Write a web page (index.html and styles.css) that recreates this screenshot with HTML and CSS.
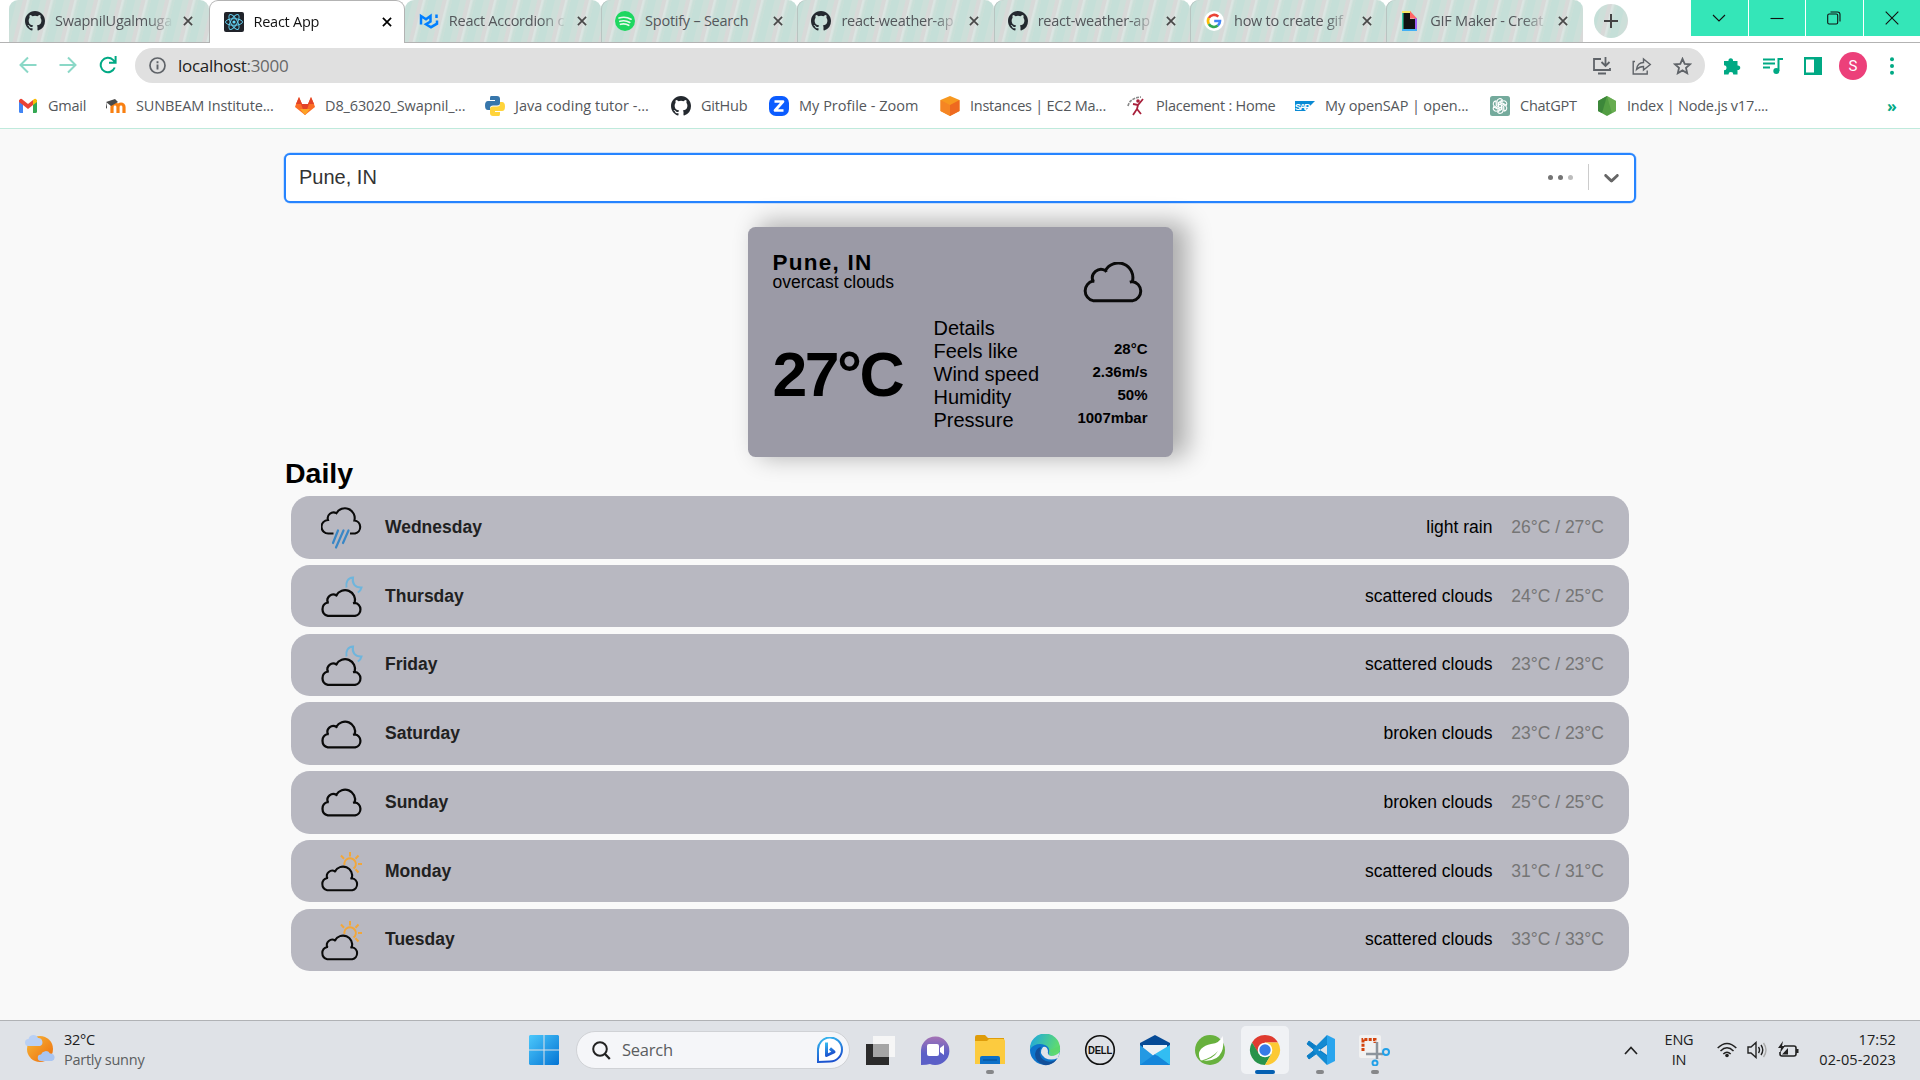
FILE: index.html
```html
<!DOCTYPE html>
<html lang="en">
<head>
<meta charset="utf-8">
<title>React App</title>
<link rel="stylesheet" href="styles.css">
</head>
<body>
<svg class="defs" width="0" height="0">
  <defs>
    <symbol id="github" viewBox="0 0 16 16"><path fill="#24292f" d="M8 0C3.58 0 0 3.58 0 8c0 3.54 2.29 6.53 5.47 7.59.4.07.55-.17.55-.38 0-.19-.01-.82-.01-1.49-2.01.37-2.53-.49-2.69-.94-.09-.23-.48-.94-.82-1.13-.28-.15-.68-.52-.01-.53.63-.01 1.08.58 1.23.82.72 1.21 1.87.87 2.33.66.07-.52.28-.87.51-1.07-1.78-.2-3.64-.89-3.64-3.95 0-.87.31-1.59.82-2.15-.08-.2-.36-1.02.08-2.12 0 0 .67-.21 2.2.82a7.4 7.4 0 0 1 4 0c1.53-1.04 2.2-.82 2.2-.82.44 1.1.16 1.92.08 2.12.51.56.82 1.27.82 2.15 0 3.07-1.87 3.75-3.65 3.95.29.25.54.73.54 1.48 0 1.07-.01 1.93-.01 2.2 0 .21.15.46.55.38A8.01 8.01 0 0 0 16 8c0-4.42-3.58-8-8-8z"/></symbol>
    <symbol id="x" viewBox="0 0 10 10"><path d="M.9.9l8.2 8.2M9.100.9L.9 9.100" fill="none" stroke="currentColor" stroke-width="1.700"/></symbol>
    <symbol id="cloud" viewBox="0 0 60 40" overflow="visible"><path fill="none" stroke="#0a0a0a" stroke-linejoin="round" d="M10.500 37.700H49.500A9.500 9.500 0 0 0 48.900 19A14.300 14.300 0 0 0 22.600 8.300A8.500 8.500 0 0 0 10.400 18.600A9.800 9.800 0 0 0 10.500 37.700ZM48.900 19l-2.500 .6M22.600 8.300l1 1.500M10.400 18.600l1.500 .2"/></symbol>
    <symbol id="moon-cloud" viewBox="0 0 42 62"><path d="M25.500 22.500C24.500 17 27 12.800 32 12.500C30.800 18.500 34 22.800 40.500 22.500C40 25 38.500 26.500 36.800 27.500" fill="none" stroke="#6fb5dc" stroke-width="2"/><use href="#cloud" x="-.5" y="24.500" width="42" height="28"/></symbol>
    <symbol id="sun-cloud" viewBox="0 0 42 62"><g fill="none" stroke="#f2a73a" stroke-width="2"><path d="M23.500 25a5.700 5.700 0 1 1 9 3.500"/><path d="M29 12v4.500M37.500 15.500l-3 3.200M41 24h-4M37.500 32.500l-3-3.200M20 15.500l3 3.200"/></g><use href="#cloud" x="-.5" y="26" width="38.500" height="25.700"/></symbol>
    <symbol id="plain-cloud" viewBox="0 0 42 62"><use href="#cloud" x="-.5" y="18" width="42" height="28"/></symbol>
    <symbol id="rain-cloud" viewBox="0 0 42 62"><path d="M12.500 37.500H7.500A6.700 6.700 0 0 1 7 24A5.800 5.800 0 0 1 15.400 17.200A9.800 9.800 0 0 1 33.400 24.500A6.600 6.600 0 0 1 34 37.500H29" fill="none" stroke="#0a0a0a" stroke-width="2.100"/><path d="M17 34.500l-5 12.500M22.500 34.500l-7.500 17M27.500 34.500l-5.500 12.500" fill="none" stroke="#3987c6" stroke-width="2.200" stroke-linecap="round"/></symbol>
  </defs>
</svg>

<header class="browser">
  <div class="strip">
    <div class="tab first"><svg class="fav"><use href="#github"/></svg><span class="title">SwapnilUgalmuga</span><svg class="close"><use href="#x"/></svg></div>
    <div class="tab active"><svg class="fav" viewBox="0 0 20 20"><rect width="20" height="20" rx="2" fill="#20232a"/><g fill="none" stroke="#61c9e8" stroke-width="1"><ellipse cx="10" cy="10" rx="8.500" ry="3.300"/><ellipse cx="10" cy="10" rx="8.500" ry="3.300" transform="rotate(60 10 10)"/><ellipse cx="10" cy="10" rx="8.500" ry="3.300" transform="rotate(120 10 10)"/></g><circle cx="10" cy="10" r="1.600" fill="#61dafb"/></svg><span class="title">React App</span><svg class="close"><use href="#x"/></svg></div>
    <div class="tab"><svg class="fav" viewBox="0 0 20 20"><path fill="none" stroke="#007fff" stroke-width="2.500" d="M2 13.500V5l5 3.200 4.500-3.200v5.500l-4.500 2.700 5 3 6-3.500V9.500M17.500 7V3.500"/></svg><span class="title">React Accordion c</span><svg class="close"><use href="#x"/></svg></div>
    <div class="tab split"><svg class="fav" viewBox="0 0 20 20"><circle cx="10" cy="10" r="10" fill="#1ed760"/><path fill="none" stroke="#e9f8ee" stroke-width="1.700" stroke-linecap="round" d="M4 7q6.500-2 12 1.200M4.800 10.300q5.400-1.500 10 1.100M5.500 13.300q4.500-1.200 8.200 1"/></svg><span class="title whole">Spotify – Search</span><svg class="close"><use href="#x"/></svg></div>
    <div class="tab split"><svg class="fav"><use href="#github"/></svg><span class="title">react-weather-ap</span><svg class="close"><use href="#x"/></svg></div>
    <div class="tab split"><svg class="fav"><use href="#github"/></svg><span class="title">react-weather-ap</span><svg class="close"><use href="#x"/></svg></div>
    <div class="tab split"><svg class="fav" viewBox="0 0 20 20"><circle cx="10" cy="10" r="10" fill="#fff"/><g fill="none" stroke-width="2.600"><path stroke="#ea4335" d="M4.800 7A6 6 0 0 1 14.300 5.600"/><path stroke="#fbbc05" d="M4.800 7A6 6 0 0 0 4.800 13"/><path stroke="#34a853" d="M4.800 13A6 6 0 0 0 13.800 14.600"/><path stroke="#4285f4" d="M13.800 14.600A6 6 0 0 0 16 10H10.200"/></g></svg><span class="title">how to create gif</span><svg class="close"><use href="#x"/></svg></div>
    <div class="tab split"><svg class="fav" viewBox="0 0 20 20"><path fill="#f5e663" d="M2 0h9v3H2z"/><path fill="#43b0f5" d="M2 17h15v3H2z"/><path fill="#9b5cf6" d="M14 7h3v11h-3z"/><path fill="#38c9a4" d="M2 2h2v16H2z"/><path fill="#111" d="M3.500 2H10v6h5v10H3.500z"/><path fill="#ff6666" d="M10 0l7 7.500h-7z"/></svg><span class="title">GIF Maker - Creat</span><svg class="close"><use href="#x"/></svg></div>
    <div class="newtab"><svg width="16" height="16" viewBox="0 0 16 16"><path d="M8 1v14M1 8h14" stroke="#444" stroke-width="2"/></svg></div>
    <div class="winbtns">
      <i><svg width="14" height="14" viewBox="0 0 14 14"><path d="M1 4l6 6 6-6"/></svg></i>
      <i><svg width="14" height="14" viewBox="0 0 14 14"><path d="M.5 7.500h13"/></svg></i>
      <i><svg width="14" height="14" viewBox="0 0 14 14"><rect x=".7" y="3" width="10" height="10" rx="1.500"/><path d="M3.500 1h7q2.500 0 2.500 2.500v7"/></svg></i>
      <i><svg width="14" height="14" viewBox="0 0 14 14"><path d="M.7.7l12.600 12.600M13.300.7L.7 13.300"/></svg></i>
    </div>
  </div>

  <div class="toolbar">
    <div class="nav">
      <svg width="18" height="18" viewBox="0 0 18 18" class="dim"><path d="M17.500 9H2M9 1.500L1.500 9 9 16.500"/></svg>
      <svg width="18" height="18" viewBox="0 0 18 18" class="dim"><path d="M.5 9H16M9 1.500L16.500 9 9 16.500"/></svg>
      <svg width="18" height="18" viewBox="0 0 18 18"><path d="M15.700 11.500A7.200 7.200 0 1 1 14 3.900L16 6M16.600 0v6.700H10"/></svg>
    </div>
    <div class="omnibox">
      <svg width="17" height="17" viewBox="0 0 17 17"><circle cx="8.500" cy="8.500" r="7.500" fill="none" stroke="#5f6368" stroke-width="1.700"/><path d="M8.500 7.500v5M8.500 4.300v2" stroke="#5f6368" stroke-width="1.900"/></svg>
      <span class="url">localhost<em>:3000</em></span>
      <div class="actions">
        <svg width="18" height="18" viewBox="0 0 18 18"><path d="M8 2H1v11h16v-2M5 16.500h8M12.500 0v8.500M8.500 5l4 4 4-4"/></svg>
        <svg width="20" height="18" viewBox="0 0 20 18"><path d="M3 4.500H1.200V17h14v-3.500M4.500 12.500q1-7 7-7V2l6.800 5.500-6.800 5.500V9.500q-4 0-7 3z" style="stroke-width:1.400"/></svg>
        <svg width="19" height="18" viewBox="0 0 19 18"><path d="M9.500 1.800l2.200 5 5.400.5-4.100 3.600 1.200 5.300-4.700-2.800-4.700 2.800L6 10.900 1.900 7.300l5.400-.5z"/></svg>
      </div>
    </div>
    <div class="ext">
      <svg width="19" height="19" viewBox="0 0 19 19"><path fill="#00a984" d="M1 5h4.500a2.300 2.300 0 1 1 4.500 0h4.500v4.500a2.300 2.300 0 1 1 0 4.500v4.500h-4.200a2.400 2.400 0 1 0-4.800 0H1v-4.200a2.500 2.500 0 1 0 0-5z"/></svg>
      <svg width="20" height="18" viewBox="0 0 20 18"><path fill="none" stroke="#00a984" stroke-width="2" d="M0 2.500h12M0 6.500h12M0 10.500h7M15.500 14V2h4.500"/><circle cx="13.300" cy="14" r="3" fill="#00a984"/></svg>
      <svg width="18" height="18" viewBox="0 0 18 18"><path fill="#00a984" fill-rule="evenodd" d="M0 0h18v18H0zM2 2.500v13h8v-13z"/></svg>
      <span class="avatar">S</span>
      <svg width="6" height="18" viewBox="0 0 6 18"><g fill="#00a984"><circle cx="3" cy="2.300" r="2"/><circle cx="3" cy="9" r="2"/><circle cx="3" cy="15.700" r="2"/></g></svg>
    </div>
  </div>

  <div class="bookmarks">
    <a><svg viewBox="0 0 20 20"><path fill="#4285f4" d="M1 4h4v13H2.500Q1 17 1 15.500z"/><path fill="#34a853" d="M15 4h4v11.500q0 1.500-1.500 1.500H15z"/><path fill="#ea4335" d="M1 6V4.500Q2.500 1.500 5 4l5 4 5-4q0 5 0 5l-5 4-5-4z"/><path fill="#fbbc04" d="M15 9V4q3-2.500 4 .5V6z"/></svg><span>Gmail</span></a>
    <a><svg viewBox="0 0 20 20"><path fill="none" stroke="#f98012" stroke-width="3.200" d="M6 17v-6a3 3 0 0 1 6 0v6M12 11a3 3 0 0 1 6 0v6"/><path fill="#4a4a4a" d="M0 6l9-3 3 3-7 4zM1 6v6l-1.500 1z"/></svg><span class="wide">SUNBEAM Institute...</span></a>
    <a><svg viewBox="0 0 20 20"><path fill="#fc6d26" d="M10 19L0 11l1-3 3-7 3 7h6l3-7 3 7 1 3z"/><path fill="#e24329" d="M10 19L6 8h8zM4 1L1 8h6zM16 1l-3 7h6z"/><path fill="#fca326" d="M10 19l-5-6h10z"/></svg><span class="wide">D8_63020_Swapnil_...</span></a>
    <a><svg viewBox="0 0 20 20"><path fill="#3776ab" d="M6 0h6q3 0 3 3v4q0 2.500-3 2.500H8Q5 9.500 5 12v2H3q-3 0-3-4.500T3 5h7V4H5V2q0-2 1-2z"/><path fill="#ffd43b" d="M14 20H8q-3 0-3-3v-4q0-2.500 3-2.500h4q3 0 3-2.500V6h2q3 0 3 4.500T17 15h-7v1h5v2q0 2-1 2z"/></svg><span class="wider">Java coding tutor -...</span></a>
    <a><svg><use href="#github"/></svg><span>GitHub</span></a>
    <a><svg viewBox="0 0 20 20"><rect width="20" height="20" rx="7" fill="#0b5cff"/><path d="M5.500 5.500h8.500l-8 9h8.500" fill="none" stroke="#fff" stroke-width="2.700" stroke-linejoin="round"/></svg><span class="wider">My Profile - Zoom</span></a>
    <a><svg viewBox="0 0 20 20"><path fill="#f7981f" d="M10 0l9.500 4v11L10 20 .5 15V4z"/><path fill="#ee6a20" d="M10 9l9.500-5v11L10 20z"/><path fill="#f58524" d="M.5 4L10 9v11L.5 15z"/></svg><span>Instances | EC2 Ma...</span></a>
    <a><svg viewBox="0 0 20 20"><path fill="none" stroke="#a8203b" stroke-width="1.800" d="M17 3l-5 6-5-1M12 9l-1 4-4 6M11 13l4 5"/><path fill="none" stroke="#888" stroke-width="1.700" stroke-dasharray="3 1" d="M2 10q2-8 13-9"/><circle cx="12" cy="5" r="1.800" fill="#a8203b"/></svg><span>Placement : Home</span></a>
    <a><svg viewBox="0 0 20 20"><path fill="#0a8ad4" d="M0 5h20L10 15H0z"/><text x="0" y="13.500" font-size="9" font-weight="bold" font-family="Liberation Sans" textLength="15" fill="#fff">SAP</text></svg><span class="wide">My openSAP | open...</span></a>
    <a><svg viewBox="0 0 20 20"><rect width="20" height="20" rx="2.500" fill="#74aa9c"/><g fill="none" stroke="#fff" stroke-width="1.100"><path id="petal" d="M7 9V5.500a3 3 0 0 1 5.500-1.500L8.500 6.500v5"/><use href="#petal" transform="rotate(60 10 10)"/><use href="#petal" transform="rotate(120 10 10)"/><use href="#petal" transform="rotate(180 10 10)"/><use href="#petal" transform="rotate(240 10 10)"/><use href="#petal" transform="rotate(300 10 10)"/></g></svg><span>ChatGPT</span></a>
    <a><svg viewBox="0 0 20 20"><path fill="#539e43" d="M10 0l9 5v10l-9 5-9-5V5z"/><path fill="#3c873a" d="M10 0L1 5v10l4 2z"/><path fill="#75b65a" d="M10 0l9 5v10l-4 2.200z" opacity=".6"/></svg><span>Index | Node.js v17....</span></a>
    <b>»</b>
  </div>
</header>

<main class="page">
  <div class="select">
    <span class="value">Pune, IN</span>
    <span class="dots"><i></i><i></i><i></i></span>
    <span class="bar"></span>
    <svg class="chev" width="25" height="25" viewBox="0 0 20 20"><path fill="#666" d="M4.516 7.548c0.436-0.446 1.043-0.481 1.576 0l3.908 3.747 3.908-3.747c0.533-0.481 1.141-0.446 1.574 0 0.436 0.445 0.408 1.197 0 1.615-0.406 0.418-4.695 4.502-4.695 4.502-0.217 0.223-0.502 0.335-0.787 0.335s-0.570-0.112-0.789-0.335c0 0-4.287-4.084-4.695-4.502s-0.436-1.170 0-1.615z"/></svg>
  </div>

  <section class="weather">
    <div class="top">
      <div><p class="city">Pune, IN</p><p class="desc">overcast clouds</p></div>
      <svg class="now"><use href="#cloud"/></svg>
    </div>
    <div class="bottom">
      <p class="temp">27°C</p>
      <div class="details">
        <div><span>Details</span></div>
        <div><span>Feels like</span><b>28°C</b></div>
        <div><span>Wind speed</span><b>2.36m/s</b></div>
        <div><span>Humidity</span><b>50%</b></div>
        <div><span>Pressure</span><b>1007mbar</b></div>
      </div>
    </div>
  </section>

  <h2>Daily</h2>
  <div class="daily">
    <div class="row"><svg><use href="#rain-cloud"/></svg><strong>Wednesday</strong><span>light rain</span><small>26°C / 27°C</small></div>
    <div class="row"><svg><use href="#moon-cloud"/></svg><strong>Thursday</strong><span>scattered clouds</span><small>24°C / 25°C</small></div>
    <div class="row"><svg><use href="#moon-cloud"/></svg><strong>Friday</strong><span>scattered clouds</span><small>23°C / 23°C</small></div>
    <div class="row"><svg><use href="#plain-cloud"/></svg><strong>Saturday</strong><span>broken clouds</span><small>23°C / 23°C</small></div>
    <div class="row"><svg><use href="#plain-cloud"/></svg><strong>Sunday</strong><span>broken clouds</span><small>25°C / 25°C</small></div>
    <div class="row"><svg><use href="#sun-cloud"/></svg><strong>Monday</strong><span>scattered clouds</span><small>31°C / 31°C</small></div>
    <div class="row"><svg><use href="#sun-cloud"/></svg><strong>Tuesday</strong><span>scattered clouds</span><small>33°C / 33°C</small></div>
  </div>
</main>

<footer class="taskbar">
  <div class="widget">
    <svg width="30" height="30" viewBox="0 0 30 30"><defs><linearGradient id="sun" x2="1" y2="1"><stop stop-color="#f6b93b"/><stop offset="1" stop-color="#ee6c0b"/></linearGradient></defs><circle cx="15" cy="15" r="13" fill="url(#sun)"/><path fill="#b9d0f5" d="M3.500 12a3.500 3.500 0 0 1 0-7 5 5 0 0 1 9.500-1A4.200 4.200 0 0 1 15 12z"/><path fill="#a9c5f2" d="M16 27a3.200 3.200 0 0 1 0-6.500 5 5 0 0 1 9-1A3.900 3.900 0 0 1 27 27z"/></svg>
    <div><p>32°C</p><p class="soft">Partly sunny</p></div>
  </div>
  <svg class="start" width="30" height="30" viewBox="0 0 30 30"><defs><linearGradient id="win" x2="1" y2="1"><stop stop-color="#4cc8fb"/><stop offset="1" stop-color="#0474d4"/></linearGradient></defs><path fill="url(#win)" d="M1 0h13.500v14.500H0V1zM15.500 0H29l1 1v13.500H15.500zM0 15.500h14.500V30H1l-1-1zM15.500 15.500H30V29l-1 1H15.500z"/></svg>
  <div class="search">
    <svg width="19" height="19" viewBox="0 0 19 19"><circle cx="8" cy="8" r="6.800" fill="none" stroke="#222" stroke-width="2"/><path d="M12.800 12.800l5 5.200" stroke="#222" stroke-width="2.300"/></svg>
    <span>Search</span>
    <svg width="26" height="26" viewBox="0 0 26 26"><defs><linearGradient id="bing" x2=".3" y2="1"><stop stop-color="#38bdf0"/><stop offset="1" stop-color="#1b52cf"/></linearGradient></defs><path d="M1 25V13A12 12 0 1 1 13 24.500z" fill="#fff" stroke="url(#bing)" stroke-width="2"/><path d="M9.500 5.500v13l7.500-3.500-4-3.500" fill="none" stroke="url(#bing)" stroke-width="3" stroke-linejoin="round"/></svg>
  </div>
  <div class="apps">
    <i><svg viewBox="0 0 32 32"><path d="M2 10h23v21H2z" fill="#2b2b2b"/><path d="M9 2h22v21H9z" fill="#f6f6f6"/><path d="M9 10h16v13H9z" fill="#a5a5a5"/></svg></i>
    <i><svg viewBox="0 0 32 32"><defs><linearGradient id="meet" x2="0" y2="1"><stop stop-color="#a573b5"/><stop offset=".6" stop-color="#5b5fc7"/></linearGradient></defs><path fill="url(#meet)" d="M2 31V16A14.200 14.200 0 1 1 16 31q-3 0-5-1-3 1-9 1z"/><rect x="8" y="10" width="12" height="12" rx="2" fill="#fff"/><path fill="#fff" d="M21 14l4-3v10l-4-3z"/></svg></i>
    <i class="open"><svg viewBox="0 0 32 32"><path d="M1 3q0-2 2-2h8l3 3h16v8H1z" fill="#df9c0a"/><path d="M1 7h12l2-2h14q2 0 2 2v23H1z" fill="#fccb3f"/><path d="M6 30v-6q0-2 2-2h16q2 0 2 2v6z" fill="#0d70c8"/><path d="M9 26h14" stroke="#064a8c"/></svg></i>
    <i><svg viewBox="0 0 32 32"><defs><linearGradient id="edge" x2="1" y2=".3"><stop stop-color="#1ba5e5"/><stop offset="1" stop-color="#5edb70"/></linearGradient></defs><circle cx="16" cy="16" r="15" fill="#0d75cc"/><path d="M1 15A15 15 0 0 1 31 14q1 8-8 8-4 0-3-4 1-5-4-7Q7 8 1 15z" fill="url(#edge)"/><path d="M12 13q-4 10 5 14 6 2 11-2-5 7-13 6-9-3-9-11 1-6 6-7z" fill="#124f99"/><path d="M14 13q-5 6 2 11 6 3 13 0l2-6q-4 4-9 4-4-1-3-5-1-5-5-4z" fill="#e0e4e9"/><path d="M21 16q1 6 10-1v-3z" fill="#5bd66f"/></svg></i>
    <i><svg viewBox="0 0 32 32"><circle cx="16" cy="16" r="14.300" fill="none" stroke="#111" stroke-width="1.600"/><text x="4" y="20" font-size="11" font-weight="bold" font-family="Liberation Sans" textLength="24" lengthAdjust="spacingAndGlyphs" fill="#111">DELL</text></svg></i>
    <i><svg viewBox="0 0 32 32"><path d="M1 9l15-8 15 8v9H1z" fill="#064a96"/><path d="M4 11h24v12H4z" fill="#eef1f5"/><path d="M1 11l15 12L31 11v20H1z" fill="#2499e3"/><path d="M16 20l15-9v20z" fill="#32bdf2"/><path d="M1 31l15-11 15 11z" fill="#1586da"/></svg></i>
    <i><svg viewBox="0 0 32 32"><circle cx="16" cy="16" r="15" fill="#68b13e"/><path d="M28.500 2q2 10-1 16-5 11-21 8Q3 20 7 15q4-4 10-5 9-1 11.500-8zM6 27q13-1 18-10Q18 24 6 27z" fill="#fff"/></svg></i>
    <i class="open current"><svg viewBox="0 0 32 32"><path fill="#df3b30" d="M3 8.500A15 15 0 0 1 29 8.500H16L9.500 20z"/><path fill="#28934b" d="M3 8.500A15 15 0 0 0 16 31l6.500-11.300-12.500 0z"/><path fill="#fcc934" d="M29 8.500A15 15 0 0 1 16 31l6.500-11.300L16 8.500z"/><circle cx="16" cy="16" r="7.300" fill="#fff"/><circle cx="16" cy="16" r="5.700" fill="#367be8"/></svg></i>
    <i class="open"><svg viewBox="0 0 32 32"><path d="M3 10l20 16v-6L5 7zM3 22L23 6v6L5 25z" fill="#0b7dc6" stroke="#0b7dc6" stroke-linejoin="round"/><path d="M23 1l8 4v22l-8 4z" fill="#2aa5ee"/><path d="M23 1v9l-9 6 9 6v9L9 17v-2z" fill="#138ad2"/><path d="M23 11v10l-7-5z" fill="#e0e4e9"/></svg></i>
    <i class="open"><svg viewBox="0 0 32 32"><rect x="0" y="1" width="22" height="23" rx="2" fill="#f1f1f1"/><path d="M4 17V5.500h12V9" fill="none" stroke="#d4430c" stroke-width="3" stroke-dasharray="3 1.300"/><path d="M18 8v17M7 20h17" stroke="#8c949c" stroke-width="2.500"/><g fill="none" stroke="#22a0e8" stroke-width="2"><circle cx="27" cy="18" r="3"/><circle cx="16" cy="29" r="2.500"/></g></svg></i>
  </div>
  <div class="tray">
    <svg class="up" width="14" height="9" viewBox="0 0 14 9"><path d="M1 8l6-6.500L13 8" fill="none" stroke="#222" stroke-width="1.700"/></svg>
    <div class="lang"><p>ENG</p><p>IN</p></div>
    <svg class="wifi" width="20" height="16" viewBox="0 0 20 16"><g fill="none" stroke="#222" stroke-width="1.500"><path d="M.7 6q9.300-9 18.600 0M3.500 9q6.500-6.500 13 0M6.300 12q3.700-3.500 7.400 0"/></g><circle cx="10" cy="13.500" r="1.800" fill="#222"/></svg>
    <svg class="vol" width="20" height="18" viewBox="0 0 20 18"><g fill="none" stroke="#222" stroke-width="1.400"><path d="M1 6h3l5-4.500v15L4 12H1zM11.500 6q2 3 0 6M14 4q3.500 5 0 10"/><path stroke="#aaa" d="M16.500 2q5 7 0 14"/></g></svg>
    <svg class="bat" width="21" height="18" viewBox="0 0 21 18"><path d="M6 5h10q2 0 2 2v6q0 2-2 2H4q-2 0-2-2v-2" fill="none" stroke="#222" stroke-width="1.600"/><path d="M18 8h2.500v4H18zM4 13.500h6V7z" fill="#222"/><path d="M5 0L0 7h3l-1 5 5-7H4z" fill="#222"/></svg>
    <div class="clock"><p>17:52</p><p>02-05-2023</p></div>
  </div>
</footer>
</body>
</html>
```
FILE: styles.css
```css
* { box-sizing: border-box; }
body { margin: 0; height: 1080px; overflow: hidden; display: flex; flex-direction: column; background: #f9f9f9; font-family: "Liberation Sans", Arial, sans-serif; }
p, h2 { margin: 0; }
i, em { font-style: normal; }
.defs { position: absolute; }
svg { flex: none; display: block; }

.browser { height: 129px; flex: none; background: #fff; border-bottom: 1px solid #bfeadc; font-family: "Open Sans", "Noto Sans", sans-serif; color: #54575b; }
.strip { height: 43px; display: flex; padding-left: 9px; border-bottom: 1px solid #b3b3b3; }
.tab { width: 196.3px; height: 42px; flex: none; display: flex; align-items: center; padding-left: 14px; border-radius: 9px 9px 0 0; }
.tab.first { width: 199.5px; padding-left: 16px; }
.tab, .newtab { background: repeating-linear-gradient(104deg, #c5dfd8 0 7px, #cddfd9 8px 13px, #d8d9d8 14px 17px, #dbe5e2 18px 19px, #cadfd8 21px 23px); }
.split { box-shadow: inset 1px 0 #b8c4c1; }
.tab.active { height: 43px; background: #fff; border: 1px solid #b3b3b3; border-bottom: 0; padding-left: 14px; color: #111; }
.fav { width: 20px; height: 20px; margin-right: 10px; }
.title { width: 118px; height: 22px; font-size: 14.5px; line-height: 21px; letter-spacing: -.25px; white-space: nowrap; -webkit-mask-image: linear-gradient(90deg, #000 92px, transparent 119px); }
.title.whole { -webkit-mask-image: none; }
.close { width: 10px; height: 10px; margin-left: 10px; color: #484848; }
.active .close { color: #000; }
.newtab { width: 34px; height: 34px; margin: 4px 0 0 11px; border-radius: 50%; display: grid; place-items: center; }
.winbtns { display: flex; gap: 1px; margin-left: auto; }
.winbtns i { width: 56.5px; height: 36px; background: #34e6b8; display: grid; place-items: center; }
.winbtns path, .winbtns rect { fill: none; stroke: #111; stroke-width: 1.1; }

.toolbar { height: 45px; display: flex; align-items: center; }
.nav { width: 135px; padding-left: 19px; display: flex; gap: 22px; margin-top: -1px; }
.nav path { fill: none; stroke: #00a984; stroke-width: 2; }
.dim { opacity: .45; }
.omnibox { width: 1570px; height: 35px; border-radius: 18px; background: #e0e0e0; display: flex; align-items: center; padding: 0 13px 0 14px; }
.url { margin-left: 12px; font-size: 17px; letter-spacing: -.3px; color: #222; }
.url em { color: #686868; }
.actions { margin-left: auto; display: flex; gap: 21px; }
.actions path { fill: none; stroke: #5f6368; stroke-width: 1.8; }
.ext { flex: 1; display: flex; align-items: center; padding-left: 18px; gap: 21px; }
.avatar { width: 28px; height: 28px; margin: 0 1px 0 -4px; border-radius: 50%; background: #ec407a; color: #fff; font: 15px/28px Roboto, sans-serif; text-align: center; }

.bookmarks { height: 35px; padding-left: 18px; display: grid; grid-template-columns: 88px 189px 190px 186px 98px 171px 186px 169px 195px 107px 290px auto; align-items: center; }
.bookmarks a { display: flex; align-items: center; gap: 10px; font-size: 14.5px; letter-spacing: -.25px; white-space: nowrap; }
.bookmarks .wide { letter-spacing: -.13px; }
.bookmarks .wider { letter-spacing: .02px; }
.bookmarks svg { width: 20px; height: 20px; }
.bookmarks b { color: #00a984; font-size: 16px; line-height: 20px; }

.page { width: 1352px; margin: 24px auto 0; height: 867px; flex: none; }
.select { height: 50px; border: 2px solid #2684ff; border-radius: 6px; background: #fff; display: flex; align-items: center; padding: 0 10px 2px 13px; font-size: 20px; color: #333; box-shadow: 0 0 0 .5px #2684ff66; }
.dots { margin-left: auto; display: flex; gap: 5px; }
.dots i { width: 5px; height: 5px; border-radius: 50%; background: #747474; }
.dots i:last-child { background: #bdbdbd; }
.bar { width: 1px; height: 26px; background: #ccc; margin: 0 10px 0 15px; }

.weather { width: 425px; height: 230px; margin: 24px auto 0; padding: 0 25px; border-radius: 7.5px; background: #9b9aa6; color: #000; box-shadow: 12.5px -2.500px 25px 2.500px rgba(0,0,0,.3); }
.top { height: 90px; padding-top: 24px; display: flex; justify-content: space-between; }
.city { font-weight: bold; font-size: 22.5px; line-height: 23px; letter-spacing: 1.25px; }
.desc { font-size: 17.5px; line-height: 17.5px; }
.now { width: 62px; height: 41px; margin: 11px 4px 0 0; stroke-width: 2.9; }
.bottom { display: flex; justify-content: space-between; }
.temp { font-weight: bold; font-size: 62.5px; line-height: 70px; letter-spacing: -2.5px; padding-top: 22px; }
.details { width: 214px; font-size: 20px; }
.details div { height: 23px; line-height: 23px; display: flex; justify-content: space-between; }
.details b { font-size: 15px; line-height: 18px; }

h2 { font-size: 28.5px; line-height: 34px; margin: -1px 0 6px 1px; color: #000; }
.daily { padding: 0 7px; display: grid; gap: 6.25px; }
.row { height: 62.5px; border-radius: 18.75px; background: #b8b8c1; display: flex; align-items: center; padding: 0 25px 0 30px; font-size: 17.5px; color: #000; }
.row svg { width: 42px; height: 62px; margin-right: 22px; stroke-width: 3.2; }
.row strong { flex: 1; color: #212121; }
.row small { font-size: 17.5px; color: #757575; margin-left: 18.75px; }

.taskbar { height: 60px; flex: none; background: #dfe2e7; border-top: 1px solid #b0b2b5; display: flex; align-items: center; padding-bottom: 1px; font: 14.5px/20px "Open Sans", "Noto Sans", sans-serif; letter-spacing: -.25px; color: #202020; }
.widget { width: 529px; padding-left: 25px; display: flex; align-items: center; gap: 9px; }
.widget svg { margin-top: -3px; }
.soft { color: #5b5d60; }
.search { width: 274px; height: 38px; margin-left: 17px; padding: 0 6px 0 15px; border-radius: 19px; background: #f5f6f9; border: 1px solid #d0d2d6; display: flex; align-items: center; font-size: 16.5px; color: #5b5d60; }
.search span { flex: 1; margin-left: 11px; }
.apps { display: flex; gap: 7px; margin-left: 6px; }
.apps i { width: 48px; height: 48px; border-radius: 5px; display: flex; flex-direction: column; align-items: center; padding-top: 8px; }
.apps svg { width: 32px; height: 32px; }
.open::after { content: ""; width: 8px; height: 4px; margin-top: 4px; border-radius: 2px; background: #868789; }
.apps .current { background: #f0f2f5; }
.current::after { width: 20px; background: #0560b2; }
.tray { margin-left: auto; padding-right: 24px; display: flex; align-items: center; }
.lang { width: 34px; margin: 0 21px 0 24px; text-align: center; }
.vol { margin: 0 11px 0 10px; }
.clock { width: 97px; text-align: right; letter-spacing: .1px; }
```
